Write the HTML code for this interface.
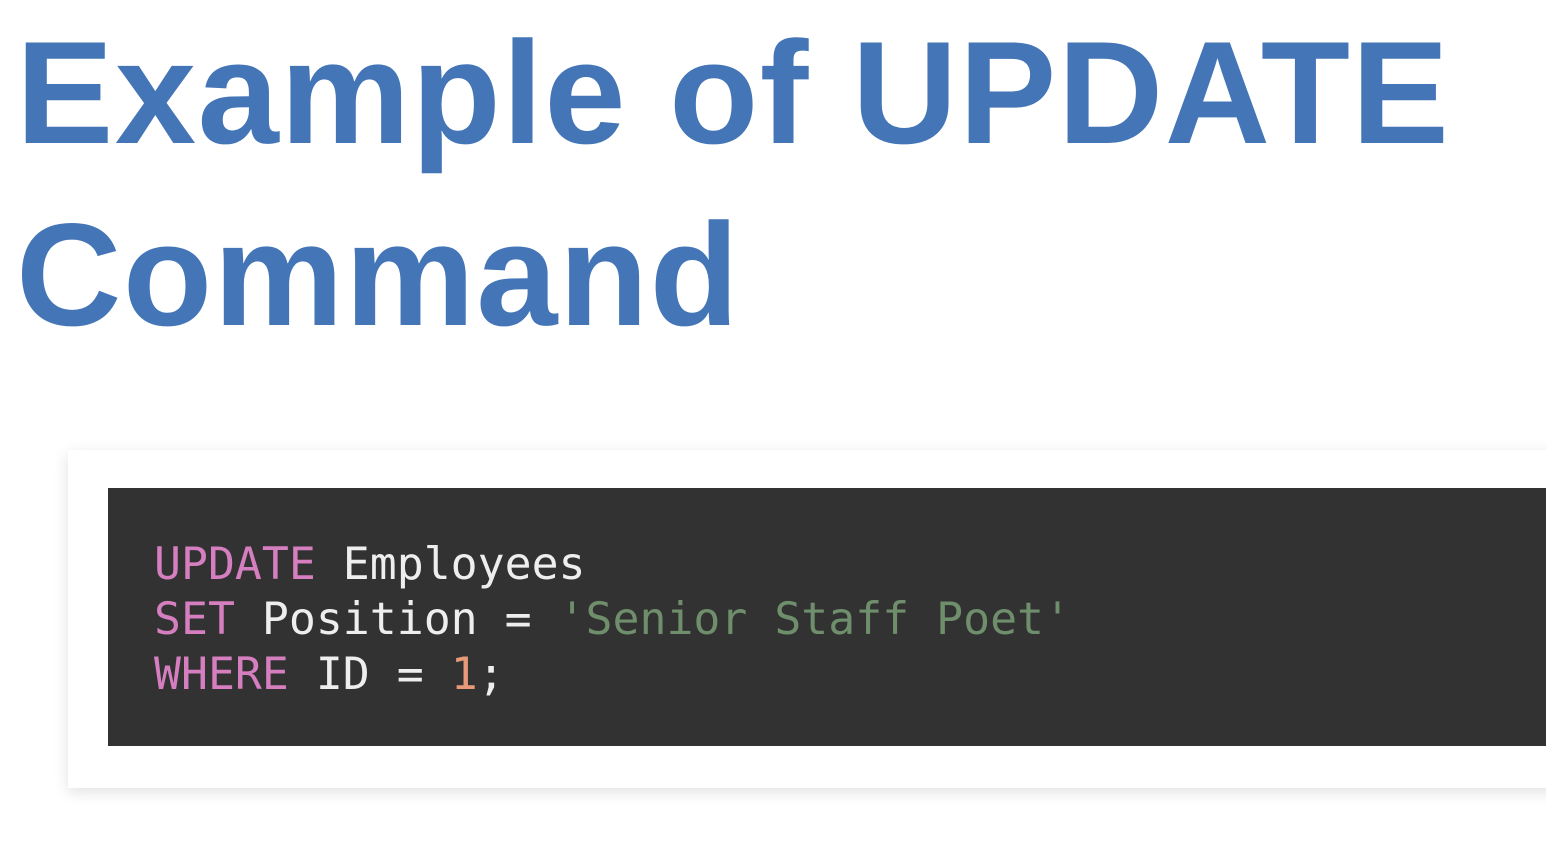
<!DOCTYPE html>
<html><head><style>
html,body{margin:0;padding:0;background:#fff;width:1546px;height:850px;overflow:hidden;position:relative}
.t{position:absolute;left:16px;font-family:"Liberation Sans",sans-serif;font-weight:bold;font-size:146px;color:#4375b7;line-height:1;white-space:nowrap;letter-spacing:1.5px}
.card{position:absolute;left:68px;top:450px;width:1500px;height:338px;background:#fff;box-shadow:0 4px 14px rgba(0,0,0,0.12)}
.code{position:absolute;left:108px;top:488px;width:1460px;height:258px;background:#323232}
.code pre{margin:0;position:absolute;left:46px;top:48px;font-family:"DejaVu Sans Mono","Liberation Mono",monospace;font-size:44.8px;line-height:55px;color:#eeeeee}
.k{color:#d57ec0}.s{color:#6f8f6c}.n{color:#e89a78}
</style></head><body>
<div class="t" style="top:20px">Example of UPDATE</div>
<div class="t" style="top:202px">Command</div>
<div class="card"></div>
<div class="code"><pre><span class="k">UPDATE</span> Employees
<span class="k">SET</span> Position = <span class="s">'Senior Staff Poet'</span>
<span class="k">WHERE</span> ID = <span class="n">1</span>;</pre></div>
</body></html>
